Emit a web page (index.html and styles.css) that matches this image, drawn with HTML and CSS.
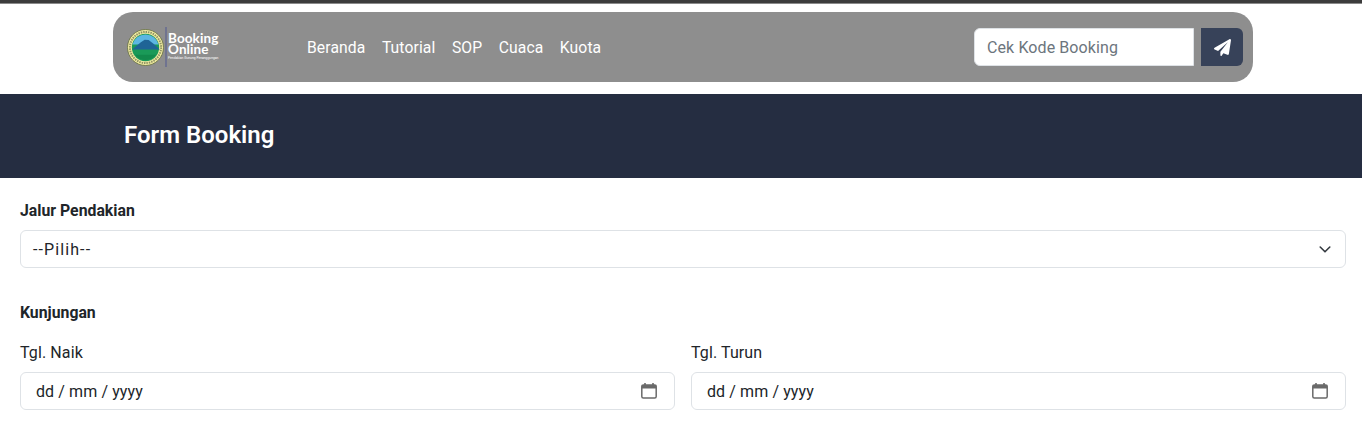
FILE: index.html
```html
<!DOCTYPE html>
<html lang="id">
<head>
<meta charset="utf-8">
<title>Form Booking</title>
<link rel="stylesheet" href="styles.css">
</head>
<body>
<div class="topline"></div>
<div class="nav-wrap">
  <nav class="nav">
    <a class="brand" href="#">
      <svg class="seal" width="37" height="37" viewBox="0 0 38 38">
        <circle cx="19" cy="19" r="18.500" fill="#efe9a0"/>
        <circle cx="19" cy="19" r="18.500" fill="none" stroke="#5f6b3c" stroke-width=".8"/>
        <circle cx="19" cy="19" r="16" fill="none" stroke="#4d5a3a" stroke-opacity=".6" stroke-width="2" stroke-dasharray="1.500 1"/>
        <circle cx="19" cy="19" r="14" fill="#1a9a58"/>
        <path d="M5.500 16a14 14 0 0 1 27 0z" fill="#5cb6e2"/>
        <path d="M5.200 21l5-4 4-3.500 4-2.500 4 .2 5 4 6.600 5.800z" fill="#1f6496"/>
        <path d="M8 26.500h22a14 14 0 0 1-22 0z" fill="#128a4c"/>
      </svg>
      <span class="brand-rule"></span>
      <span class="brand-text">
        <span class="brand-title">Booking<br>Online</span>
        <span class="brand-sub">Pendakian Gunung Penanggungan</span>
      </span>
    </a>
    <ul class="menu">
      <li><a href="#">Beranda</a></li>
      <li><a href="#">Tutorial</a></li>
      <li><a href="#">SOP</a></li>
      <li><a href="#">Cuaca</a></li>
      <li><a href="#">Kuota</a></li>
    </ul>
    <form class="check">
      <input class="check-input" type="text" placeholder="Cek Kode Booking">
      <button class="check-btn" type="button" aria-label="Kirim">
        <svg width="17" height="17" viewBox="0 0 512 512"><path d="M511.600 36.860l-64 415.100c-1.500 9.700-7.400 18.200-16 23-4.700 2.600-10 4-15.300 4-4.100 0-8.200-.8-12.100-2.400l-122.700-51.100-50.800 76.200C226.300 508.500 219.800 512 212.800 512c-11.600 0-20.800-9.400-20.800-20.800v-96.200c0-7.100 2.400-14.100 6.800-19.700L416 96 122.300 360.300 19.700 317.500C8.500 312.800.9 302.300.1 290.100c-.8-12.200 5.500-23.700 16-29.800l448-255.100c10.700-6.100 23.900-5.500 34 1.400 10.100 6.900 15.400 19 13.500 30.200z" fill="#fff"/></svg>
      </button>
    </form>
  </nav>
</div>
<header class="banner"><h1 class="banner-title">Form Booking</h1></header>
<main class="form">
  <div class="field-label strong">Jalur Pendakian</div>
  <div class="control select">
    <span class="select-text">--Pilih--</span>
    <svg width="16" height="16" viewBox="0 0 16 16"><path d="M3.200 6l4.800 4.800L12.800 6" fill="none" stroke="#343a40" stroke-width="1.600" stroke-linecap="round" stroke-linejoin="round"/></svg>
  </div>
  <div class="section-title strong">Kunjungan</div>
  <div class="dates">
    <div>
      <div class="field-label">Tgl. Naik</div>
      <div class="control date">
        <span class="date-text">dd / mm / yyyy</span>
        <svg width="18" height="18" viewBox="0 0 18 18"><path d="M5 1v2.500M13 1v2.500" stroke="#6a6a6a" stroke-width="1.600"/><rect x="1.800" y="3" width="14.400" height="13" rx="1.500" fill="none" stroke="#6a6a6a" stroke-width="1.500"/><rect x="1.800" y="3" width="14.400" height="3.500" fill="#6a6a6a"/></svg>
      </div>
    </div>
    <div>
      <div class="field-label">Tgl. Turun</div>
      <div class="control date">
        <span class="date-text">dd / mm / yyyy</span>
        <svg width="18" height="18" viewBox="0 0 18 18"><path d="M5 1v2.500M13 1v2.500" stroke="#6a6a6a" stroke-width="1.600"/><rect x="1.800" y="3" width="14.400" height="13" rx="1.500" fill="none" stroke="#6a6a6a" stroke-width="1.500"/><rect x="1.800" y="3" width="14.400" height="3.500" fill="#6a6a6a"/></svg>
      </div>
    </div>
  </div>
</main>
</body>
</html>
```

FILE: styles.css
```css
* { box-sizing: border-box; }
html, body { margin: 0; padding: 0; }
body {
  height: 436px;
  overflow: hidden;
  background: #fff;
  color: #212529;
  font-family: "Roboto", "Noto Sans", sans-serif;
  font-size: 16px;
  line-height: 24px;
  letter-spacing: .1px;
}
.topline { height: 4px; background: #3c3c3c; border-bottom: 1px solid #8a8a8a; }
.nav-wrap { padding: 8px 109px 12px 113px; }
.nav {
  height: 70px;
  background: #8e8e8e;
  border-radius: 20px;
  display: flex;
  align-items: center;
  padding: 0 10px 0 14px;
}
.brand { display: flex; align-items: center; width: 180px; flex: none; color: #fff; text-decoration: none; letter-spacing: 0; }
.seal { flex: none; }
.brand-rule { width: 2px; height: 40px; background: #6f7390; margin: 0 2px 0 1px; }
.brand-text { display: flex; flex-direction: column; margin-left: -1px; }
.brand-title { font-family: "Lato", sans-serif; font-weight: 700; font-size: 13.500px; line-height: 11px; letter-spacing: .1px; }
.brand-sub { font-size: 3.300px; line-height: 5px; margin-top: 1px; white-space: nowrap; }
.menu { display: flex; gap: 16.500px; list-style: none; margin: 0; padding: 1px 0 0; flex: 1; font-size: 15.700px; }
.menu a { color: #fff; text-decoration: none; }
.check { display: flex; gap: 7px; align-items: center; }
.check-input {
  width: 220px;
  height: 38px;
  border: 1px solid #dee2e6;
  border-radius: 6px 0 0 6px;
  background: #fff;
  padding: 0 12px;
  font: inherit;
  letter-spacing: .1px;
  outline: 0;
}
.check-input::placeholder { color: #6c757d; opacity: 1; }
.check-btn {
  width: 42px;
  height: 38px;
  border: 0;
  border-radius: 0 6px 6px 0;
  background: #374259;
  display: flex;
  align-items: center;
  justify-content: center;
  padding: 0;
}
.banner { height: 84px; background: #252d41; padding: 0 124px; display: flex; align-items: center; }
.banner-title { margin: 0 0 2px; color: #fff; font-size: 24px; font-weight: 600; line-height: 30px; letter-spacing: 0; }
.form { padding: 20px 16px 0 20px; }
.field-label { height: 24px; margin-bottom: 8px; padding-top: 1px; }
.strong { font-weight: 700; letter-spacing: 0; font-size: 15.800px; }
.control {
  height: 38px;
  border: 1px solid #dee2e6;
  border-radius: 6px;
  display: flex;
  align-items: center;
  justify-content: space-between;
  background: #fff;
}
.select { padding: 0 12px; }
.select-text { letter-spacing: 1.100px; padding-top: 1px; }
.date { padding: 0 16px 0 15px; }
.date-text { padding-top: 1px; }
.section-title { margin-top: 32px; margin-bottom: 16px; padding-top: 1px; height: 24px; }
.dates { display: grid; grid-template-columns: 1fr 1fr; gap: 16px; }
```
